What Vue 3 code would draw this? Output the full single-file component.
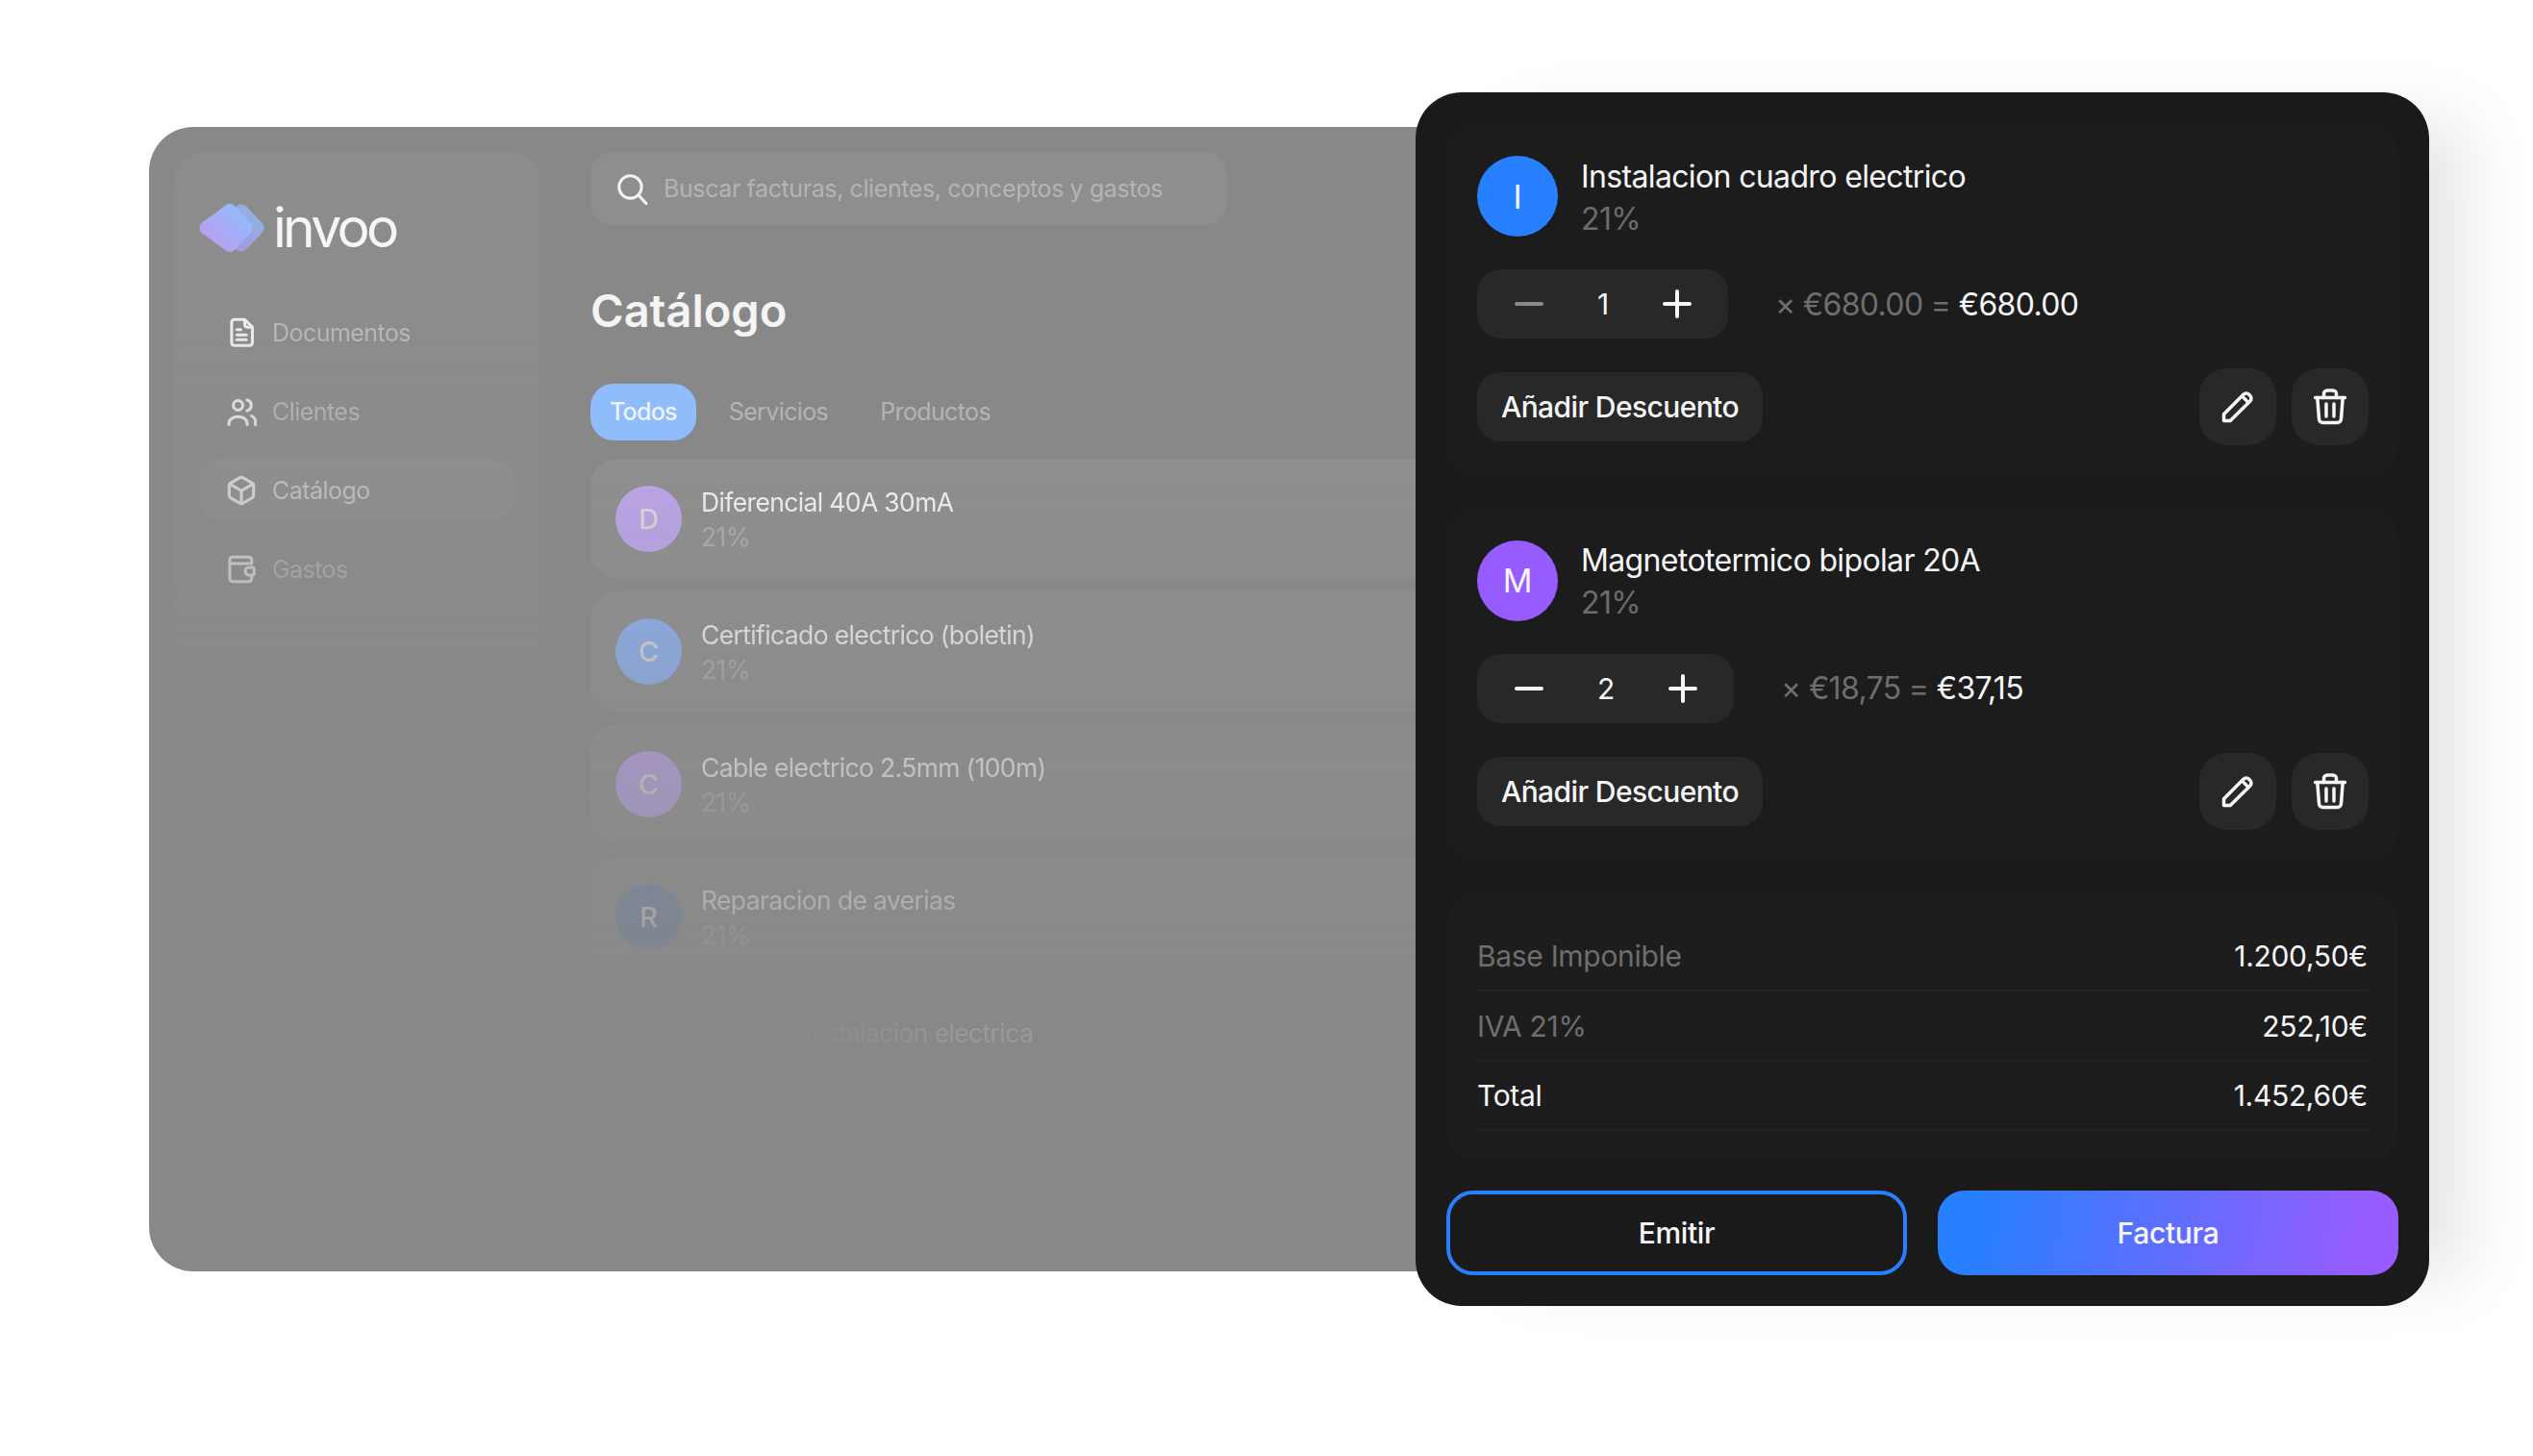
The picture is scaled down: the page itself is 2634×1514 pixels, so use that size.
<template>
  <div class="page">
    <section class="dash">
      <aside class="sidebar">
        <div class="logo">
          <svg class="logo-mark" viewBox="0 0 68 52" width="68" height="52">
            <defs>
              <linearGradient id="lgFront" x1="0" y1="1" x2="1" y2="0">
                <stop offset="0.15" stop-color="#bd9bf1" />
                <stop offset="0.85" stop-color="#90bdfd" />
              </linearGradient>
              <linearGradient id="lgBack" x1="0" y1="1" x2="1" y2="0">
                <stop offset="0.2" stop-color="#a498de" />
                <stop offset="0.85" stop-color="#8fb3e2" />
              </linearGradient>
            </defs>
            <path fill="url(#lgBack)" d="M39 3.500a7 7 0 0 1 10 0l16.500 17.500a7 7 0 0 1 0 10L49 48.500a7 7 0 0 1-10 0L22 31a7 7 0 0 1 0-10z" />
            <path fill="url(#lgFront)" d="M27 3a7 7 0 0 1 10 0l16.500 18a7 7 0 0 1 0 10L37 49a7 7 0 0 1-10 0L2.500 31a7 7 0 0 1 0-10z" />
          </svg>
          <span class="logo-text">invoo</span>
        </div>
        <nav class="nav">
          <div
            v-for="item in navItems"
            :key="item.label"
            class="nav-item"
            :class="{ active: item.active }"
          >
            <svg class="nav-icon" viewBox="0 0 24 24" fill="none" stroke="currentColor" stroke-width="2.300" stroke-linecap="round" stroke-linejoin="round">
              <path v-for="d in item.paths" :key="d" :d="d" />
            </svg>
            <span>{{ item.label }}</span>
          </div>
        </nav>
      </aside>

      <main class="content">
        <div class="search">
          <svg class="search-icon" viewBox="0 0 24 24" fill="none" stroke="currentColor" stroke-width="2.200" stroke-linecap="round">
            <circle cx="10.500" cy="10.500" r="8.500" />
            <path d="M16.800 16.800 22.500 23" />
          </svg>
          <span>Buscar facturas, clientes, conceptos y gastos</span>
        </div>
        <h1 class="title">Catálogo</h1>
        <div class="tabs">
          <span class="tab on">Todos</span>
          <span class="tab">Servicios</span>
          <span class="tab">Productos</span>
        </div>
        <div class="rows">
          <div v-for="row in catalog" :key="row.name" class="row">
            <div class="dot" :class="row.color">{{ row.name[0] }}</div>
            <div>
              <div class="row-name">{{ row.name }}</div>
              <div class="row-pct">21%</div>
            </div>
          </div>
          <div class="row ghost">
            <div class="row-name">Instalacion electrica</div>
          </div>
        </div>
      </main>
    </section>

    <section class="panel">
      <div v-for="line in lines" :key="line.name" class="card">
        <div class="line-head">
          <div class="avatar" :class="line.color">{{ line.name[0] }}</div>
          <div class="line-text">
            <div class="line-name">{{ line.name }}</div>
            <div class="line-pct">21%</div>
          </div>
        </div>
        <div class="qty-row">
          <div class="stepper">
            <svg class="step" :class="{ dim: line.qty === 1 }" viewBox="0 0 30 30" stroke="currentColor" stroke-width="4" stroke-linecap="round">
              <path d="M2 15h26" />
            </svg>
            <span class="qty">{{ line.qty }}</span>
            <svg class="step" viewBox="0 0 30 30" stroke="currentColor" stroke-width="4" stroke-linecap="round">
              <path d="M2 15h26M15 2v26" />
            </svg>
          </div>
          <div class="price">
            <span class="muted">× {{ line.price }} = </span>{{ line.total }}
          </div>
        </div>
        <div class="actions">
          <button class="discount">Añadir Descuento</button>
          <div class="icon-btns">
            <button class="icon-btn">
              <svg width="34" height="34" viewBox="0 0 34 34" fill="none" stroke="currentColor" stroke-width="3.500" stroke-linecap="round" stroke-linejoin="round">
                <path d="M2.500 31.500v-6.700L22.800 4.300a4.200 4.200 0 0 1 6 0l.9.900a4.200 4.200 0 0 1 0 6L9.200 31.500z" />
                <path d="M23 7.500l4.500 4.500" />
              </svg>
            </button>
            <button class="icon-btn">
              <svg width="34" height="38" viewBox="0 0 34 38" fill="none" stroke="currentColor" stroke-width="3.500" stroke-linecap="round" stroke-linejoin="round">
                <path d="M1.500 9.500h31" />
                <path d="M10.500 9.500V5.500a3.500 3.500 0 0 1 3.500-3.500h6a3.500 3.500 0 0 1 3.500 3.500v4" />
                <path d="M3.800 9.500l1.700 22a4 4 0 0 0 4 4h15a4 4 0 0 0 4-4l1.700-22" />
                <path d="M13 16v13M21 16v13" />
              </svg>
            </button>
          </div>
        </div>
      </div>

      <div class="card totals">
        <div v-for="t in totals" :key="t.label" class="total-row">
          <span :class="{ muted: !t.strong }">{{ t.label }}</span>
          <span>{{ t.value }}</span>
        </div>
      </div>

      <div class="buttons">
        <button class="btn outline">Emitir</button>
        <button class="btn grad">Factura</button>
      </div>
    </section>
  </div>
</template>

<script setup>
const navItems = [
  {
    label: 'Documentos',
    paths: [
      'M6.400 1.700h8.200l6 6v12.200a2 2 0 0 1-2 2H6.400a2 2 0 0 1-2-2V3.700a2 2 0 0 1 2-2z',
      'M14.600 1.700v4a2 2 0 0 0 2 2h4',
      'M8.500 9.500h3',
      'M8.500 13.700h7.300',
      'M8.500 17.500h7.300',
    ],
  },
  {
    label: 'Clientes',
    paths: [
      'M9.400 3.400a3.700 3.700 0 1 0 0 7.400 3.700 3.700 0 1 0 0-7.400z',
      'M16.500 3a4.300 4.300 0 0 1 0 8.300',
      'M2.300 22.200v-1a7.100 5.300 0 0 1 14.200 0v1',
      'M20 15.500a5 5 0 0 1 3 5.500v1.200',
    ],
  },
  {
    label: 'Catálogo',
    active: true,
    paths: [
      'M21.500 8a2 2 0 0 0-1-1.730l-7.500-4.300a2 2 0 0 0-2 0l-7.500 4.300A2 2 0 0 0 2.500 8v8a2 2 0 0 0 1 1.730l7.500 4.300a2 2 0 0 0 2 0l7.500-4.300a2 2 0 0 0 1-1.730z',
      'M3 7l9 5.200L21 7',
      'M12 22.300V12.200',
    ],
  },
  {
    label: 'Gastos',
    paths: [
      'M20 7.500V4.500a2 2 0 0 0-2-2H5a2 2 0 0 0-2 2v15a2 2 0 0 0 2 2h13a2 2 0 0 0 2-2v-2',
      'M3 7.500h17',
      'M18 10.500h2.500a1.500 1.500 0 0 1 1.500 1.500v3a1.500 1.500 0 0 1-1.500 1.500H18a3 3 0 0 1 0-6z',
    ],
  },
];

const catalog = [
  { name: 'Diferencial 40A 30mA', color: 'lilac' },
  { name: 'Certificado electrico (boletin)', color: 'sky' },
  { name: 'Cable electrico 2.5mm (100m)', color: 'grape' },
  { name: 'Reparacion de averias', color: 'steel' },
];

const lines = [
  { name: 'Instalacion cuadro electrico', color: 'blue', qty: 1, price: '€680.00', total: '€680.00' },
  { name: 'Magnetotermico bipolar 20A', color: 'violet', qty: 2, price: '€18,75', total: '€37,15' },
];

const totals = [
  { label: 'Base Imponible', value: '1.200,50€' },
  { label: 'IVA 21%', value: '252,10€' },
  { label: 'Total', value: '1.452,60€', strong: true },
];
</script>

<style>
html, body {
  margin: 0;
  background: #fff;
}
</style>

<style scoped>
.page {
  position: relative;
  width: 2634px;
  height: 1514px;
  padding: 132px 0 0 155px;
  box-sizing: border-box;
  overflow: hidden;
  background: #fff;
  font-family: Inter, "Liberation Sans", sans-serif;
  letter-spacing: -0.32px;
}

button {
  font-family: inherit;
  letter-spacing: inherit;
  border: 0;
  color: inherit;
}

/* dimmed dashboard behind */
.dash {
  display: flex;
  gap: 53px;
  width: 1400px;
  height: 1190px;
  padding: 26px 0 0 26px;
  box-sizing: border-box;
  border-radius: 46px;
  background: #888;
  overflow: hidden;
}

.sidebar {
  width: 380px;
  height: 800px;
  flex: none;
  padding: 53px 26px 0 27px;
  box-sizing: border-box;
  border-radius: 30px;
  background: #8c8c8c;
  -webkit-mask-image: linear-gradient(#000 170px, transparent 760px);
  mask-image: linear-gradient(#000 170px, transparent 760px);
}

.logo {
  display: flex;
  align-items: center;
  gap: 9px;
  height: 51px;
  margin: 0 0 52px -1px;
}

.logo-mark {
  flex: none;
}

.logo-text {
  font-size: 57px;
  line-height: 51px;
  letter-spacing: -3.700px;
  color: #f6f6f6;
}

.nav {
  display: flex;
  flex-direction: column;
  gap: 19px;
}

.nav-item {
  display: flex;
  align-items: center;
  gap: 16px;
  height: 63px;
  padding-left: 27px;
  border-radius: 22px;
  font-size: 25px;
  letter-spacing: -0.022em;
  color: #b8b8b8;
}

.nav-item.active {
  background: #909090;
  color: #d0d0d0;
}

.nav-icon {
  width: 32px;
  height: 32px;
  flex: none;
  color: #ececec;
}

.content {
  flex: 1;
  min-width: 0;
}

.search {
  display: flex;
  align-items: center;
  gap: 16px;
  width: 662px;
  height: 76px;
  padding-left: 27px;
  box-sizing: border-box;
  border-radius: 24px;
  background: #8e8e8e;
  font-size: 25px;
  letter-spacing: -0.016em;
  color: #b4b4b4;
}

.search-icon {
  width: 33px;
  height: 33px;
  color: #f2f2f2;
}

.title {
  margin: 57px 0 0;
  font-size: 47px;
  line-height: 64px;
  font-weight: 600;
  letter-spacing: 0;
  color: #f4f4f4;
}

.tabs {
  display: flex;
  align-items: center;
  gap: 14px;
  margin-top: 44px;
}

.tab {
  padding: 0 20px;
  height: 59px;
  line-height: 59px;
  font-size: 25px;
  letter-spacing: -0.025em;
  color: #b4b4b4;
  border-radius: 24px;
}

.tab.on {
  background: #90bcfb;
  color: #eef4fd;
  font-weight: 500;
  letter-spacing: -0.03em;
}

.rows {
  display: flex;
  flex-direction: column;
  gap: 13px;
  margin-top: 19px;
  -webkit-mask-image: linear-gradient(#000 0, transparent 720px);
  mask-image: linear-gradient(#000 0, transparent 720px);
}

.row {
  display: flex;
  align-items: center;
  gap: 20px;
  height: 125px;
  padding-left: 26px;
  border-radius: 28px;
  background: #8e8e8e;
}

.row.ghost {
  align-items: flex-start;
  padding: 27px 0 0 223px;
  background: none;
}

.row.ghost .row-name {
  -webkit-mask-image: linear-gradient(90deg, rgba(0, 0, 0, 0.1), #000 170px);
  mask-image: linear-gradient(90deg, rgba(0, 0, 0, 0.1), #000 170px);
}

.dot {
  display: flex;
  align-items: center;
  justify-content: center;
  width: 69px;
  height: 69px;
  flex: none;
  border-radius: 50%;
  font-size: 29px;
  font-weight: 500;
  color: #d8d8d8;
}

.dot.lilac { background: #bba4e8; }
.dot.sky { background: #8cb0f0; }
.dot.grape { background: #b8a0e8; }
.dot.steel { background: #6c84a8; }

.row-name {
  font-size: 26.500px;
  line-height: 36px;
  letter-spacing: -0.024em;
  color: #f0f0f0;
}

.row-pct {
  font-size: 26.500px;
  line-height: 36px;
  letter-spacing: -0.024em;
  color: #aaa;
}

/* invoice panel in front */
.panel {
  position: absolute;
  left: 1472px;
  top: 96px;
  display: flex;
  flex-direction: column;
  gap: 32px;
  width: 1054px;
  height: 1262px;
  padding: 32px;
  box-sizing: border-box;
  border-radius: 48px;
  background: #1a1a1a;
  box-shadow: 70px 0 70px -30px rgba(0, 0, 0, 0.1);
  color: #f6f6f8;
}

.card {
  display: flex;
  flex-direction: column;
  gap: 32px;
  height: 369px;
  padding: 34px 31px 0 32px;
  box-sizing: border-box;
  border-radius: 30px;
  background: #1c1c1c;
}

.line-head {
  display: flex;
  align-items: center;
  gap: 24px;
  height: 84px;
}

.line-text {
  padding-top: 3px;
}

.avatar {
  display: flex;
  align-items: center;
  justify-content: center;
  width: 84px;
  height: 84px;
  flex: none;
  border-radius: 50%;
  font-size: 34px;
  font-weight: 400;
}

.avatar.blue { background: #2680ff; }
.avatar.violet { background: #975cff; }

.line-name {
  font-size: 32px;
  line-height: 44px;
  letter-spacing: -0.02em;
}

.line-pct {
  font-size: 32px;
  line-height: 44px;
  letter-spacing: -0.02em;
  color: #6c6c6c;
}

.qty-row {
  display: flex;
  align-items: center;
  gap: 49px;
  margin-top: 2px;
}

.stepper {
  display: flex;
  align-items: center;
  justify-content: space-between;
  gap: 56px;
  height: 72px;
  padding: 0 38px 0 39px;
  border-radius: 24px;
  background: #282828;
}

.step {
  width: 30px;
  height: 30px;
}

.step.dim {
  color: #8a8a8a;
}

.qty {
  font-size: 30px;
}

.price {
  font-size: 32px;
  letter-spacing: -0.02em;
}

.muted {
  color: #6e6e6e;
}

.actions {
  display: flex;
  align-items: center;
  justify-content: space-between;
  margin-top: -1px;
}

.discount {
  height: 72px;
  padding: 0 25px;
  border-radius: 24px;
  background: #282828;
  font-size: 30px;
  font-weight: 500;
  letter-spacing: -0.02em;
}

.icon-btns {
  display: flex;
  gap: 16px;
}

.icon-btn {
  display: flex;
  align-items: center;
  justify-content: center;
  width: 80px;
  height: 80px;
  padding: 0;
  border-radius: 28px;
  background: #282828;
}

.totals {
  gap: 0;
  height: 279px;
  padding: 31px 32px 0;
  background: #1d1d1d;
}

.total-row {
  display: flex;
  align-items: center;
  justify-content: space-between;
  height: 72.500px;
  box-sizing: border-box;
  border-bottom: 2px solid #232323;
  font-size: 30px;
}

.buttons {
  display: grid;
  grid-template-columns: 1fr 1fr;
  gap: 32px;
}

.btn {
  height: 88px;
  padding: 0;
  border-radius: 28px;
  font-size: 30px;
  font-weight: 500;
  box-sizing: border-box;
}

.btn.outline {
  background: #1a1a1a;
  border: 4px solid #2680ff;
}

.btn.grad {
  background: linear-gradient(100deg, #2680ff 0%, #2680ff 8%, #975cff 92%);
}
</style>
